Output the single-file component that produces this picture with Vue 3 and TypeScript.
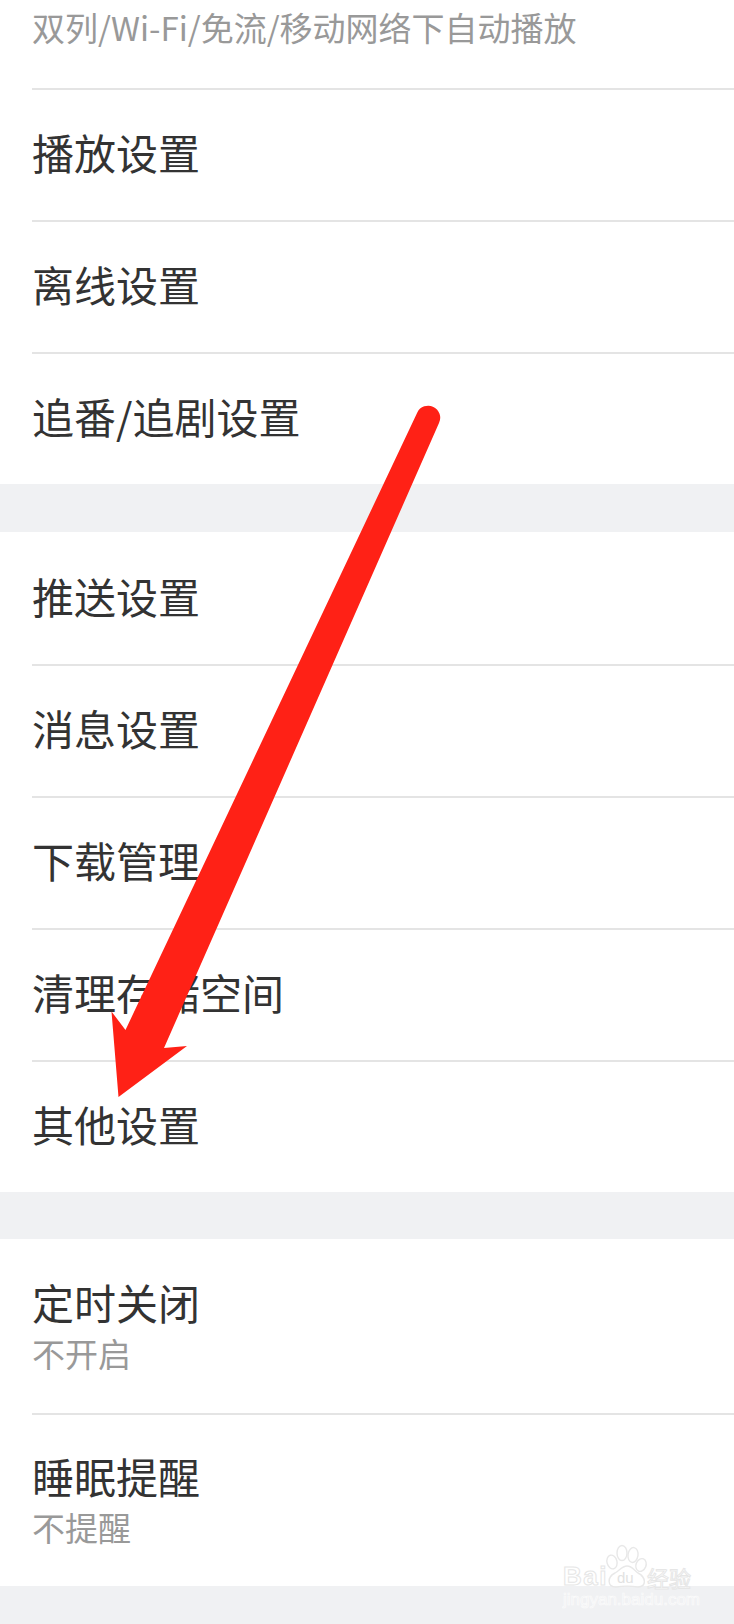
<script setup lang="ts">
interface Row {
  title?: string
  sub?: string
}

const sections: Row[][] = [
  [
    { sub: '双列/Wi-Fi/免流/移动网络下自动播放' },
    { title: '播放设置' },
    { title: '离线设置' },
    { title: '追番/追剧设置' }
  ],
  [
    { title: '推送设置' },
    { title: '消息设置' },
    { title: '下载管理' },
    { title: '清理存储空间' },
    { title: '其他设置' }
  ],
  [
    { title: '定时关闭', sub: '不开启' },
    { title: '睡眠提醒', sub: '不提醒' }
  ]
]
</script>

<template>
  <div class="page">
    <section v-for="(rows, i) in sections" :key="i" class="group">
      <div
        v-for="(row, j) in rows"
        :key="j"
        :class="['row', { 'row-double': row.title && row.sub, 'row-clipped': !row.title }]"
      >
        <div v-if="row.title" class="title">{{ row.title }}</div>
        <div v-if="row.sub" class="sub">{{ row.sub }}</div>
      </div>
    </section>

    <svg class="arrow" width="734" height="1624" viewBox="0 0 734 1624">
      <path
        d="M417.3 412.5 A12 12 0 0 1 439 423 L164 1048 L187 1046 L118.5 1097 L111.5 1011.5 L125.5 1030 Z"
        fill="#ff2116"
      />
    </svg>

    <div class="watermark">
      <svg class="paw" width="48" height="48" viewBox="0 0 48 48">
        <g fill="#fff" fill-opacity="0.5" stroke="#e8e8e8" stroke-width="1.4">
          <ellipse cx="8" cy="20" rx="5" ry="7" transform="rotate(-15 8 20)" />
          <ellipse cx="18" cy="11" rx="5" ry="7.5" />
          <ellipse cx="29" cy="13" rx="5" ry="7.5" transform="rotate(8 29 13)" />
          <ellipse cx="37" cy="23" rx="5" ry="6.5" transform="rotate(22 37 23)" />
          <path d="M23 24 C28 24 30 28 34 31 C42 35 43 45 34 45 C28 44 18 44 12 45 C3 45 3 35 11 31 C16 28 18 24 23 24 Z" />
        </g>
      </svg>
      <span class="wm-bai">Bai</span>
      <span class="wm-du">du</span>
      <span class="wm-cn">经验</span>
      <span class="wm-url">jingyan.baidu.com</span>
    </div>
  </div>
</template>

<style scoped>
.page {
  position: relative;
  width: 734px;
  height: 1624px;
  overflow: hidden;
  background: #f0f1f3;
  font-family: "Noto Sans CJK SC", "Liberation Sans", sans-serif;
}

.group {
  background: #fff;
}

.group:nth-of-type(1) {
  margin-bottom: 48px;
}

.group:nth-of-type(2) {
  padding-top: 2px;
  margin-bottom: 47px;
}

.group:nth-of-type(3) {
  padding-top: 4px;
}

.row {
  height: 132px;
  margin-left: 32px;
  padding-bottom: 6px;
  box-sizing: border-box;
  display: flex;
  flex-direction: column;
  justify-content: center;
  border-bottom: 2px solid #e4e4e4;
}

.row:last-child {
  border-bottom: none;
  height: 130px;
}

.row-clipped {
  height: 90px;
  padding: 4px 0 0;
  justify-content: flex-start;
}

.row-double {
  height: 172px;
}

.row-double:last-child {
  height: 171px;
  padding-bottom: 3px;
}

.title {
  font-size: 42px;
  line-height: 56px;
  color: #333;
}

.sub {
  font-size: 33px;
  line-height: 46px;
  color: #999;
}

.arrow {
  position: absolute;
  left: 0;
  top: 0;
}

.watermark {
  position: absolute;
  left: 560px;
  top: 1540px;
  width: 150px;
  height: 70px;
  font-family: "Liberation Sans", sans-serif;
}

.paw {
  position: absolute;
  left: 44px;
  top: 2px;
}

.wm-bai,
.wm-du,
.wm-cn,
.wm-url {
  position: absolute;
  white-space: nowrap;
}

.wm-bai {
  left: 3px;
  top: 21px;
  font-size: 26px;
  font-weight: 700;
  line-height: 30px;
  letter-spacing: 1.5px;
  color: #fff;
  -webkit-text-stroke: 1px #e6e6e6;
}

.wm-du {
  left: 57px;
  top: 29px;
  font-size: 15px;
  line-height: 18px;
  color: #e2e2e2;
}

.wm-cn {
  left: 87px;
  top: 25px;
  font-size: 22px;
  line-height: 24px;
  font-family: "Noto Sans CJK SC", sans-serif;
  color: #fff;
  -webkit-text-stroke: 1px #e6e6e6;
}

.wm-url {
  left: 3px;
  top: 50px;
  font-size: 17px;
  line-height: 19px;
  color: transparent;
  -webkit-text-stroke: 0.7px #fbfbfb;
}
</style>
